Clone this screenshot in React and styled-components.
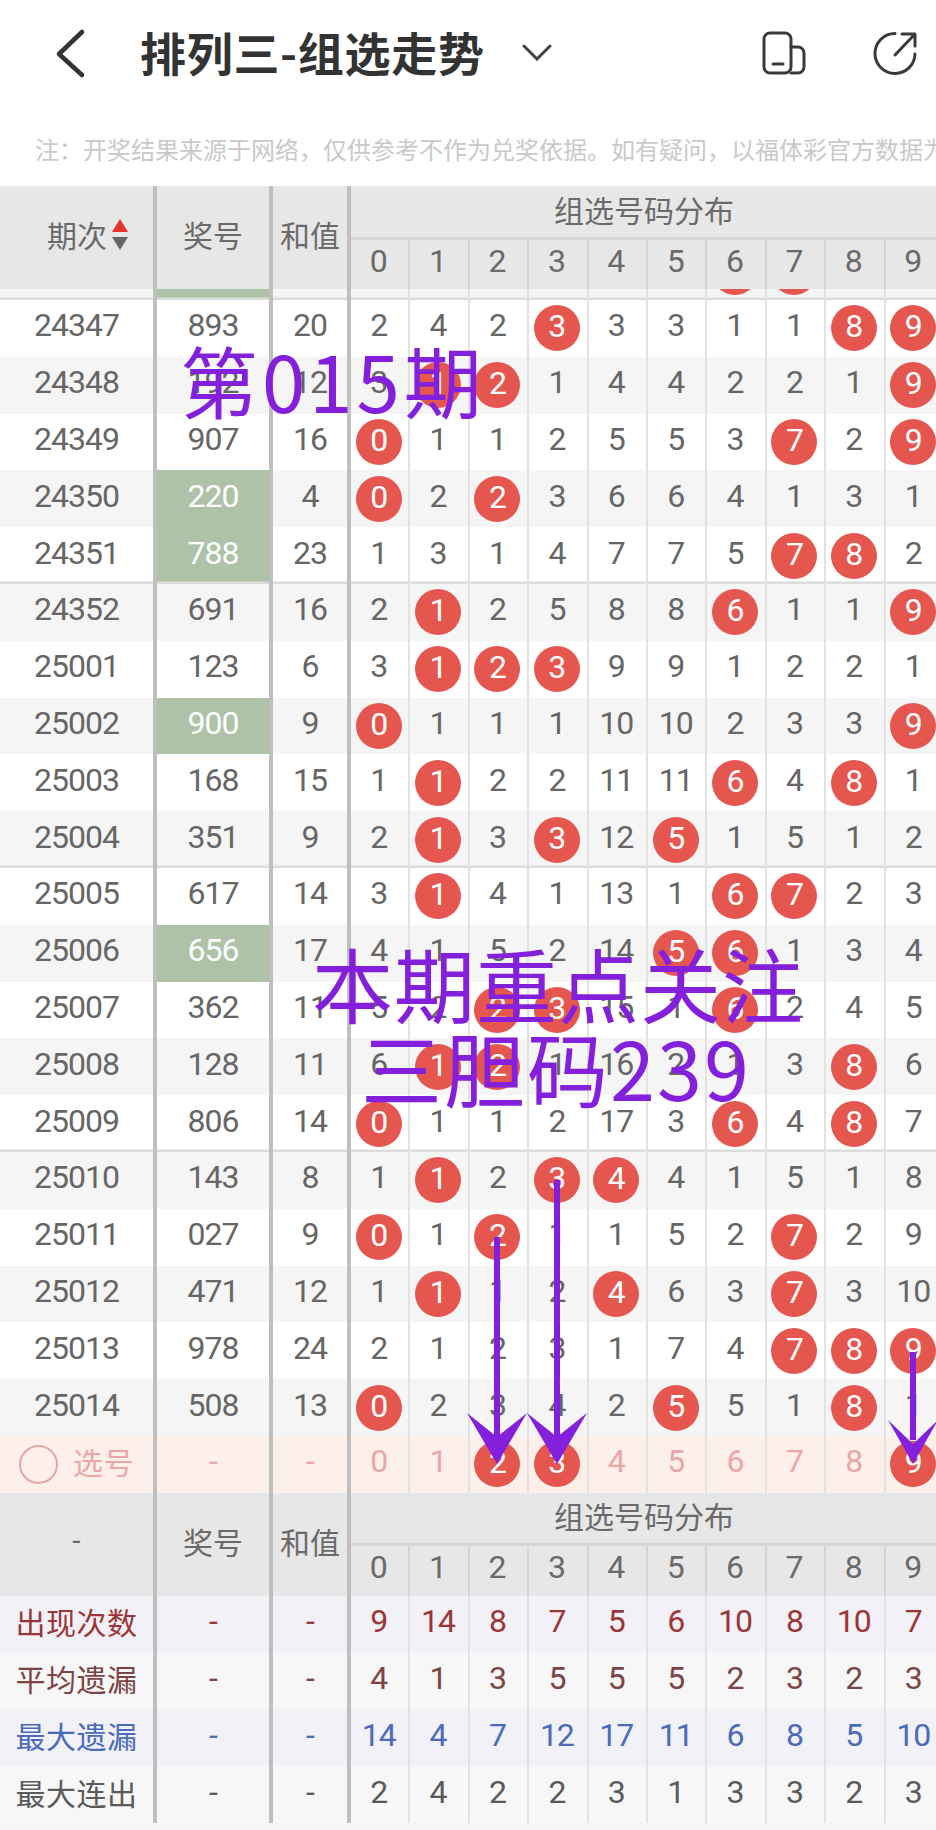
import styled, { createGlobalStyle } from 'styled-components';

const GlobalStyle = createGlobalStyle`
    html,
    body {
        margin: 0;
        padding: 0;
        background: #f6f6f6;
    }
    * {
        box-sizing: border-box;
    }
`;

const DIGITS = [0, 1, 2, 3, 4, 5, 6, 7, 8, 9];

// a * marks a number drawn in a red ball
const ROWS = [
    { id: '24347', num: '893', sum: '20', nums: '2 4 2 *3 3 3 1 1 *8 *9' },
    { id: '24348', num: '192', sum: '12', nums: '3 *1 *2 1 4 4 2 2 1 *9' },
    { id: '24349', num: '907', sum: '16', nums: '*0 1 1 2 5 5 3 *7 2 *9' },
    { id: '24350', num: '220', sum: '4', nums: '*0 2 *2 3 6 6 4 1 3 1', hit: true },
    { id: '24351', num: '788', sum: '23', nums: '1 3 1 4 7 7 5 *7 *8 2', hit: true },
    { id: '24352', num: '691', sum: '16', nums: '2 *1 2 5 8 8 *6 1 1 *9' },
    { id: '25001', num: '123', sum: '6', nums: '3 *1 *2 *3 9 9 1 2 2 1' },
    { id: '25002', num: '900', sum: '9', nums: '*0 1 1 1 10 10 2 3 3 *9', hit: true },
    { id: '25003', num: '168', sum: '15', nums: '1 *1 2 2 11 11 *6 4 *8 1' },
    { id: '25004', num: '351', sum: '9', nums: '2 *1 3 *3 12 *5 1 5 1 2' },
    { id: '25005', num: '617', sum: '14', nums: '3 *1 4 1 13 1 *6 *7 2 3' },
    { id: '25006', num: '656', sum: '17', nums: '4 1 5 2 14 *5 *6 1 3 4', hit: true },
    { id: '25007', num: '362', sum: '11', nums: '5 2 *2 *3 15 1 *6 2 4 5' },
    { id: '25008', num: '128', sum: '11', nums: '6 *1 *2 1 16 2 1 3 *8 6' },
    { id: '25009', num: '806', sum: '14', nums: '*0 1 1 2 17 3 *6 4 *8 7' },
    { id: '25010', num: '143', sum: '8', nums: '1 *1 2 *3 *4 4 1 5 1 8' },
    { id: '25011', num: '027', sum: '9', nums: '*0 1 *2 1 1 5 2 *7 2 9' },
    { id: '25012', num: '471', sum: '12', nums: '1 *1 1 2 *4 6 3 *7 3 10' },
    { id: '25013', num: '978', sum: '24', nums: '2 1 2 3 1 7 4 *7 *8 *9' },
    { id: '25014', num: '508', sum: '13', nums: '*0 2 3 4 2 *5 5 1 *8 1' },
];

const STATS = [
    { label: '出现次数', color: '#9c3535', bg: '#f1f1f7', nums: [9, 14, 8, 7, 5, 6, 10, 8, 10, 7] },
    { label: '平均遗漏', color: '#7c4444', bg: '#f7f7f7', nums: [4, 1, 3, 5, 5, 5, 2, 3, 2, 3] },
    { label: '最大遗漏', color: '#4a6abb', bg: '#f1f1f7', nums: [14, 4, 7, 12, 17, 11, 6, 8, 5, 10] },
    { label: '最大连出', color: '#5a5a5a', bg: '#f7f7f7', nums: [2, 4, 2, 2, 3, 1, 3, 3, 2, 3] },
];

const ARROWS = [
    { x: 497, top: 1237, wing: 1413, half: 30 },
    { x: 557, top: 1180, wing: 1413, half: 30 },
    { x: 913, top: 1352, wing: 1420, half: 25 },
];

const NumberCells = ({ nums }) =>
    nums.split(' ').map((n, i) => <Cell key={i}>{n[0] === '*' ? <Ball>{n.slice(1)}</Ball> : n}</Cell>);

const TableHead = ({ first, short }) => (
    <Head $short={short}>
        <HeadSide>{first}</HeadSide>
        <HeadSide>奖号</HeadSide>
        <HeadSide>和值</HeadSide>
        <HeadTitle>组选号码分布</HeadTitle>
        {DIGITS.map((d) => (
            <HeadDigit key={d}>{d}</HeadDigit>
        ))}
    </Head>
);

const App = () => (
    <Page>
        <GlobalStyle />
        <TopBar>
            <BackIcon viewBox='0 0 32 52'>
                <path d='M27 5 L4 27 L27 48' />
            </BackIcon>
            <Title>排列三-组选走势</Title>
            <CaretIcon viewBox='0 0 30 17'>
                <path d='M2 2 L15 15 L28 2' />
            </CaretIcon>
            <Actions>
                <ActionIcon viewBox='0 0 48 44'>
                    <rect x='4' y='2' width='27' height='40' rx='6' />
                    <path d='M31 16 H38 A6 6 0 0 1 44 22 V36 A6 6 0 0 1 38 42 H31' />
                    <path d='M13 33 H23' />
                </ActionIcon>
                <ActionIcon viewBox='0 0 48 44'>
                    <path d='M24 2.5 A20 20 0 1 0 44 23' />
                    <path d='M24 24 L44 3 M31 3 H44 V15' />
                </ActionIcon>
            </Actions>
        </TopBar>
        <Note>注：开奖结果来源于网络，仅供参考不作为兑奖依据。如有疑问，以福体彩官方数据为准</Note>
        <Table>
            <TableHead
                first={
                    <PeriodLabel>
                        期次
                        <SortMark>
                            <SortUp />
                            <SortDown />
                        </SortMark>
                    </PeriodLabel>
                }
            />
            <Peek>
                <Row $striped $groupEnd>
                    <Cell $side />
                    <Cell $side $hit />
                    <Cell $side />
                    <NumberCells nums='1 1 1 1 1 1 *6 *7 1 1' />
                </Row>
            </Peek>
            {ROWS.map((row, i) => (
                <Row key={row.id} $striped={i % 2 === 1} $groupEnd={i % 5 === 4 && i < 15}>
                    <Cell $side>{row.id}</Cell>
                    <Cell $side $hit={row.hit}>
                        {row.num}
                    </Cell>
                    <Cell $side>{row.sum}</Cell>
                    <NumberCells nums={row.nums} />
                </Row>
            ))}
            <PickRow>
                <Cell $side $label>
                    <PickRing />
                    选号
                </Cell>
                <Cell $side>-</Cell>
                <Cell $side>-</Cell>
                <NumberCells nums='0 1 *2 *3 4 5 6 7 8 *9' />
            </PickRow>
            <TableHead first='-' short />
            {STATS.map((stat) => (
                <Row key={stat.label} $bg={stat.bg} $color={stat.color}>
                    <Cell $side $label>
                        {stat.label}
                    </Cell>
                    <Cell $side>-</Cell>
                    <Cell $side>-</Cell>
                    {stat.nums.map((n, i) => (
                        <Cell key={i}>{n}</Cell>
                    ))}
                </Row>
            ))}
        </Table>
        <Scribble $x={180} $y={325} $size={78} $spacing={4}>
            第015期
        </Scribble>
        <Scribble $x={312} $y={925} $size={81} $spacing={1}>
            本期重点关注
        </Scribble>
        <Scribble $x={361} $y={1009} $size={81} $spacing={2}>
            三胆码239
        </Scribble>
        <ArrowLayer viewBox='0 0 936 1830'>
            {ARROWS.map((a) => (
                <g key={a.x}>
                    <line x1={a.x} y1={a.top} x2={a.x} y2={1440} />
                    <polygon
                        points={`${a.x - a.half},${a.wing} ${a.x},${a.wing + 24} ${a.x + a.half},${a.wing} ${a.x},1464`}
                    />
                </g>
            ))}
        </ArrowLayer>
    </Page>
);

const Page = styled.div`
    position: relative;
    width: 936px;
    height: 1830px;
    overflow: hidden;
    font-family: Roboto, 'Noto Sans CJK SC', sans-serif;
`;

const TopBar = styled.div`
    display: flex;
    align-items: center;
    height: 105px;
    padding-left: 55px;
    background: #fff;
`;

const BackIcon = styled.svg`
    width: 32px;
    height: 52px;
    margin-right: 53px;
    fill: none;
    stroke: #333;
    stroke-width: 4.5;
    stroke-linecap: round;
    stroke-linejoin: round;
`;

const Title = styled.h1`
    margin: 0 37px 4px 0;
    font-family: 'Noto Sans CJK SC', sans-serif;
    font-size: 46px;
    font-weight: 700;
    line-height: 1;
    letter-spacing: 0.7px;
    color: #333;
    white-space: nowrap;
`;

const CaretIcon = styled.svg`
    width: 30px;
    height: 17px;
    fill: none;
    stroke: #444;
    stroke-width: 3;
    stroke-linecap: round;
`;

const Actions = styled.div`
    display: flex;
    gap: 63px;
    margin-left: auto;
    margin-right: 17px;
`;

const ActionIcon = styled.svg`
    width: 48px;
    height: 44px;
    fill: none;
    stroke: #3a3a3a;
    stroke-width: 3;
    stroke-linecap: round;
    stroke-linejoin: round;
`;

const Note = styled.div`
    display: flex;
    align-items: center;
    height: 81px;
    padding: 5px 0 0 35px;
    background: #fff;
    font-family: 'Noto Sans CJK SC', sans-serif;
    font-size: 24px;
    color: #c9c9c9;
    white-space: nowrap;
    overflow: hidden;
`;

const Table = styled.div`
    width: 936px;
    overflow: hidden;
`;

const COLUMNS = '157px 116px 78px repeat(10, 59.4px)';

const Head = styled.div`
    display: grid;
    grid-template-columns: ${COLUMNS};
    grid-template-rows: ${(p) => (p.$short ? '53px 50px' : '54px 49px')};
    width: 945px;
    background: #e7e7e7;
    color: #6a6a6a;
    font-size: 30px;
`;

const HeadSide = styled.div`
    grid-row: span 2;
    display: flex;
    align-items: center;
    justify-content: center;
    padding-bottom: 7px;
    border-right: 4px solid #bfbfbf;
`;

const PeriodLabel = styled.div`
    display: flex;
    align-items: center;
    margin-left: 22px;
`;

const HeadTitle = styled.div`
    grid-column: span 10;
    padding: 0 8px 5px 0;
    display: flex;
    align-items: center;
    justify-content: center;
    border-bottom: 3px solid #d6d6d6;
`;

const HeadDigit = styled.div`
    display: flex;
    align-items: center;
    justify-content: center;
    padding: 0 2px 7px 0;
    border-right: 2px solid #d4d4d4;
    font-size: 32px;
`;

const SortMark = styled.span`
    display: flex;
    flex-direction: column;
    gap: 5px;
    margin-left: 5px;
`;

const SortUp = styled.i`
    border-left: 8px solid transparent;
    border-right: 8px solid transparent;
    border-bottom: 13px solid #e8342a;
`;

const SortDown = styled.i`
    border-left: 8px solid transparent;
    border-right: 8px solid transparent;
    border-top: 13px solid #666;
`;

const Peek = styled.div`
    display: flex;
    align-items: flex-end;
    height: 11px;
    overflow: hidden;
`;

const Row = styled.div`
    --line: ${(p) => (p.$groupEnd ? '#dcdcdc' : 'transparent')};
    flex: none;
    display: grid;
    grid-template-columns: ${COLUMNS};
    grid-template-rows: 56.8px;
    width: 945px;
    height: 56.8px;
    background: ${(p) => p.$bg || (p.$striped ? '#f5f5f5' : '#fff')};
    color: ${(p) => p.$color || '#666'};
`;

const Cell = styled.div`
    display: flex;
    align-items: center;
    justify-content: center;
    min-width: 0;
    min-height: 0;
    padding: 0 ${(p) => (p.$side ? 0 : 2)}px 6px 0;
    border-right: ${(p) => (p.$side ? '4px solid #bfbfbf' : '2px solid #e2e2e2')};
    box-shadow: inset 0 -2.5px var(--line);
    background: ${(p) => (p.$hit ? '#adc2a6' : 'transparent')};
    color: ${(p) => (p.$hit ? '#fff' : 'inherit')};
    font-size: ${(p) => (p.$label ? 30 : 32)}px;
    letter-spacing: ${(p) => (p.$label ? 0.5 : -1)}px;
    white-space: nowrap;
`;

const PickRow = styled(Row)`
    background: #fdf0eb;
    color: #eca6a6;
`;

const PickRing = styled.span`
    flex: none;
    width: 39px;
    height: 39px;
    margin: 6px 15px 0 0;
    border: 2.5px solid #e8a5a5;
    border-radius: 50%;
`;

const Ball = styled.span`
    flex: none;
    display: flex;
    align-items: center;
    justify-content: center;
    width: 46px;
    height: 46px;
    margin-top: 6px;
    padding-bottom: 4px;
    border-radius: 50%;
    background: #e5564f;
    color: #fff;
`;

const Scribble = styled.div`
    position: absolute;
    left: ${(p) => p.$x}px;
    top: ${(p) => p.$y}px;
    font-family: 'Noto Sans CJK SC', sans-serif;
    font-size: ${(p) => p.$size}px;
    line-height: 1.4;
    letter-spacing: ${(p) => p.$spacing}px;
    color: #8420dc;
    white-space: nowrap;
`;

const ArrowLayer = styled.svg`
    position: absolute;
    left: 0;
    top: 0;
    width: 936px;
    height: 1830px;

    line {
        stroke: #8420dc;
        stroke-width: 6;
    }
    polygon {
        fill: #8420dc;
    }
`;

export default App;
